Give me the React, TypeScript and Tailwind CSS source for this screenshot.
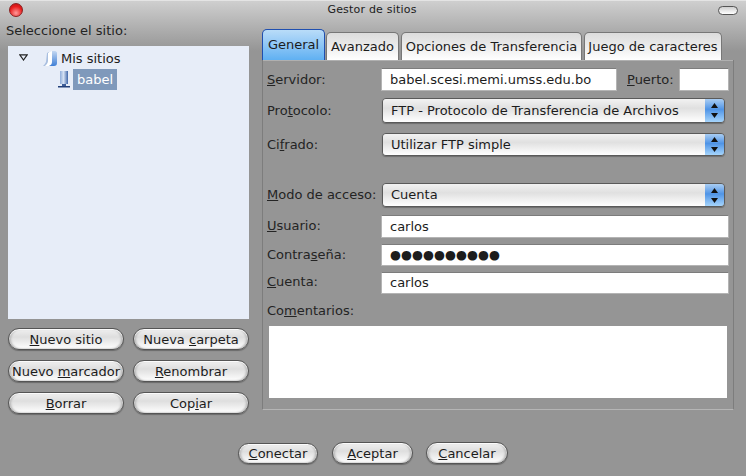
const FONT = "font-['DejaVu_Sans',sans-serif]";

function Pill({ children, w, h = 'h-[22px]' }: { children: React.ReactNode; w: string; h?: string }) {
  return (
    <button
      className={`${w} ${h} shrink-0 rounded-full border border-[#555] bg-gradient-to-b from-[#f0f0f0] via-[#dedede] via-40% to-white text-[13px] leading-none text-[#1c1c1c] shadow-[0_1px_1px_#6a6a6a,inset_0_1px_1px_#fff,inset_2px_0_2px_#bbb,inset_-2px_0_2px_#bbb]`}
    >
      {children}
    </button>
  );
}

function Tab({ label, active, w }: { label: string; active?: boolean; w: string }) {
  if (active) {
    return (
      <div className={`${w} flex h-[31px] items-center justify-center rounded-t-[5px] border border-b-0 border-[#1f4fb0] bg-gradient-to-b from-[#b9dcf8] to-[#5fb0f2] text-[13px] text-[#1c1c1c]`}>
        {label}
      </div>
    );
  }
  return (
    <div className={`${w} flex h-[28px] items-center justify-center rounded-t-[5px] border border-b-0 border-[#777] bg-gradient-to-b from-[#dcdcdc] via-[#ececec] to-white text-[13px] text-[#1c1c1c]`}>
      {label}
    </div>
  );
}

function Field({ children, className }: { children?: React.ReactNode; className: string }) {
  return (
    <div className={`${className} flex items-center border border-[#b4b4b4] border-t-[#7c7c7c] bg-white pl-2 text-[#1c1c1c]`}>
      {children}
    </div>
  );
}

function Select({ value, h }: { value: string; h: string }) {
  return (
    <div className={`ml-px flex ${h} w-[343px] overflow-hidden rounded-[4px] border border-[#5a5a5a] shadow-[0_1px_1px_#6e6e6e]`}>
      <div className="flex flex-1 items-center bg-gradient-to-b from-[#f2f2f2] via-[#e0e0e0] via-40% to-white pl-2 text-[13px] text-[#1c1c1c]">
        {value}
      </div>
      <div className="flex w-[19px] flex-col items-center justify-center gap-[5px] bg-gradient-to-b from-[#a9cdf2] via-[#4f94e6] via-45% to-[#a5d4fb]">
        <svg width="7" height="5" viewBox="0 0 7 5"><path d="M3.5 0 7 5H0z" fill="#111" /></svg>
        <svg width="7" height="5" viewBox="0 0 7 5"><path d="M3.5 5 7 0H0z" fill="#111" /></svg>
      </div>
    </div>
  );
}

function Label({ children, className = '' }: { children: React.ReactNode; className?: string }) {
  return <span className={`w-[114px] shrink-0 whitespace-nowrap text-[13px] text-[#242424] ${className}`}>{children}</span>;
}

function FolderIcon() {
  return (
    <svg width="14" height="17" viewBox="0 0 14 17">
      <defs>
        <linearGradient id="fld" x1="0" x2="0" y1="0" y2="1">
          <stop offset="0" stopColor="#c4d8f2" />
          <stop offset="1" stopColor="#3f7fd6" />
        </linearGradient>
      </defs>
      <path d="M0 16c1-1 2-2 3-4l1-9 2-1v12l-2 2z" fill="#a9bfe0" />
      <path d="M5 3 9 1v11c0 2-1 3-3 4H2c1-1 3-3 3-5z" fill="#ffffff" />
      <path d="M9 1h3c1 0 2 1 2 2v10c0 2-1 3-3 3H6c2-1 3-2 3-4z" fill="url(#fld)" />
    </svg>
  );
}

function ServerIcon() {
  return (
    <svg width="12" height="17" viewBox="0 0 12 17">
      <defs>
        <linearGradient id="srv" x1="0" x2="1" y1="0" y2="0">
          <stop offset="0" stopColor="#8fadda" />
          <stop offset="0.45" stopColor="#d5e1f3" />
          <stop offset="1" stopColor="#3f66a8" />
        </linearGradient>
      </defs>
      <rect x="2" y="0" width="8" height="13" fill="url(#srv)" />
      <rect x="4" y="13" width="4" height="2" fill="#3d5d98" />
      <rect x="0" y="15" width="12" height="1.5" fill="#23407a" />
    </svg>
  );
}

export default function App() {
  return (
    <div className={`${FONT} flex h-[476px] w-[746px] flex-col overflow-hidden bg-gradient-to-b from-[#cfcfcf] to-[#959595] to-[50px] border-t border-[#e4e4e4]`}>
      {/* Title bar */}
      <div className="flex h-[17px] shrink-0 items-start justify-between pl-[9px] pr-[8px] pt-[2px]">
        <div className="h-[14px] w-[14px] rounded-full border border-[#8a2020] bg-[radial-gradient(circle_at_50%_75%,#ff9a9a,#e81c1c_60%,#b81212)]" />
        <span className="ml-[3px] text-[11px] leading-[13px] tracking-[0.2px] text-[#1c1c1c]">Gestor de sitios</span>
        <div className="mt-[3px] h-[9px] w-[20px] rounded-full border border-[#555] bg-gradient-to-b from-[#cfcfcf] to-white" />
      </div>

      <div className="flex flex-1 flex-col">
        <div className="flex">
          {/* Site tree */}
          <div className="ml-[8px] flex w-[241px] shrink-0 flex-col">
            <span className="-ml-[2px] mt-[5px] h-[23px] text-[13px] leading-[16px] text-[#242424]">Seleccione el sitio:</span>
            <div className="h-[273px] bg-[#e7edf8] pl-[12px] pt-[4px]">
              <div className="flex h-[17px] items-center text-[13px] text-[#1c1c1c]">
                <svg className="mb-[2px] ml-[-1px]" width="9" height="7" viewBox="0 0 9 7"><path d="M.8.8h7.4L4.5 6z" fill="none" stroke="#222" strokeWidth="1.2" /></svg>
                <span className="ml-[15px] flex"><FolderIcon /></span>
                <span className="ml-[4px]">Mis sitios</span>
              </div>
              <div className="ml-[38px] mt-[2px] flex items-center">
                <ServerIcon />
                <span className="ml-[3px] flex h-[21px] items-center bg-[#7f99bb] px-[4px] text-[13px] text-white">babel</span>
              </div>
            </div>
            <div className="mt-[9px] grid grid-cols-[116px_116px] gap-x-[9px] gap-y-[10px]">
              <Pill w="w-full"><u>N</u>uevo sitio</Pill>
              <Pill w="w-full">Nueva <u>c</u>arpeta</Pill>
              <Pill w="w-full">Nuevo <u>m</u>arcador</Pill>
              <Pill w="w-full"><u>R</u>enombrar</Pill>
              <Pill w="w-full"><u>B</u>orrar</Pill>
              <Pill w="w-full">Cop<u>i</u>ar</Pill>
            </div>
          </div>

          {/* Tabs */}
          <div className="ml-[13px] flex w-[472px] flex-col">
            <div className="mt-[11px] flex h-[31px] items-end">
              <Tab label="General" active w="w-[63px]" />
              <Tab label="Avanzado" w="w-[73px] ml-px" />
              <Tab label="Opciones de Transferencia" w="w-[181px] ml-[2px]" />
              <Tab label="Juego de caracteres" w="w-[138px] ml-[2px]" />
            </div>
            <div className="flex h-[350px] flex-col border border-t-0 border-[#7d7d7d] border-b-[#b5b5b5] pl-[4px] shadow-[inset_0_1px_0_#b0b0b0]">
              <div className="mt-[8px] flex h-[23px] items-center">
                <Label><u>S</u>ervidor:</Label>
                <Field className="h-[23px] w-[236px] text-[13px]">babel.scesi.memi.umss.edu.bo</Field>
                <span className="ml-[10px] w-[52px] text-[13px] text-[#242424]"><u>P</u>uerto:</span>
                <Field className="h-[23px] w-[50px]" />
              </div>
              <div className="mt-[7px] flex items-center">
                <Label>Pro<u>t</u>ocolo:</Label>
                <Select value="FTP - Protocolo de Transferencia de Archivos" h="h-[25px]" />
              </div>
              <div className="mt-[10px] flex items-center">
                <Label>Ci<u>f</u>rado:</Label>
                <Select value="Utilizar FTP simple" h="h-[23px]" />
              </div>
              <div className="mt-[27px] flex items-center">
                <Label><u>M</u>odo de acceso:</Label>
                <Select value="Cuenta" h="h-[24px]" />
              </div>
              <div className="mt-[8px] flex h-[23px] items-center">
                <Label className="-mt-[1px]"><u>U</u>suario:</Label>
                <Field className="h-[23px] w-[348px] text-[13px]">carlos</Field>
              </div>
              <div className="mt-[6px] flex h-[22px] items-center">
                <Label className="-mt-[1px]">Contra<u>s</u>eña:</Label>
                <Field className="h-[22px] w-[348px] text-[12.6px]">●●●●●●●●●●</Field>
              </div>
              <div className="mt-[6px] flex h-[22px] items-center">
                <Label className="-mt-[2px]"><u>C</u>uenta:</Label>
                <Field className="h-[22px] w-[348px] text-[13px]">carlos</Field>
              </div>
              <span className="mt-[9px] h-[23px] text-[13px] leading-[16px] text-[#242424]">Co<u>m</u>entarios:</span>
              <div className="ml-[2px] h-[72px] w-[458px] bg-white" />
            </div>
          </div>
        </div>

        {/* Dialog buttons */}
        <div className="mt-[28px] flex items-center pl-[238px]">
          <Pill w="w-[80px]" h="h-[21px]"><u>C</u>onectar</Pill>
          <Pill w="w-[81px] ml-[14px]"><u>A</u>ceptar</Pill>
          <Pill w="w-[82px] ml-[13px]"><u>C</u>ancelar</Pill>
        </div>
      </div>
    </div>
  );
}
